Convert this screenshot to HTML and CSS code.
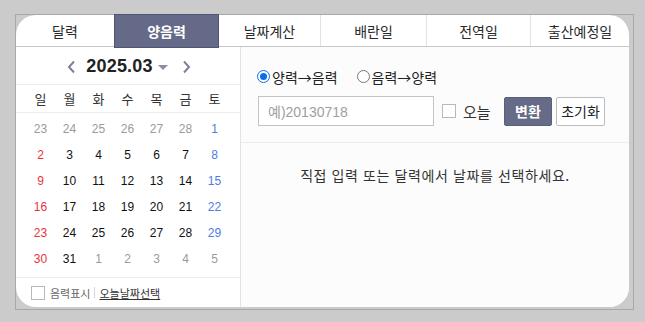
FILE: index.html
```html
<!DOCTYPE html>
<html lang="ko">
<head>
<meta charset="utf-8">
<link rel="stylesheet" href="styles.css">
</head>
<body>
<div class="frame">
  <div class="panel">
    <div class="tabs">
      <div class="tab t1">달력</div>
      <div class="tab t2 active">양음력</div>
      <div class="tab t3">날짜계산</div>
      <div class="tab t4">배란일</div>
      <div class="tab t5">전역일</div>
      <div class="tab t6">출산예정일</div>
    </div>
    <div class="body">
      <div class="cal">
        <div class="cal-head">
          <span class="arrow">
            <svg width="9" height="14" viewBox="0 0 9 14"><path d="M7 1.5 L2 7 L7 12.5" fill="none" stroke="#7d8299" stroke-width="2"/></svg>
          </span>
          <span class="month">2025.03</span>
          <span class="caret"></span>
          <span class="arrow right">
            <svg width="9" height="14" viewBox="0 0 9 14"><path d="M2 1.5 L7 7 L2 12.5" fill="none" stroke="#7d8299" stroke-width="2"/></svg>
          </span>
        </div>
        <div class="week">
          <span>일</span><span>월</span><span>화</span><span>수</span><span>목</span><span>금</span><span>토</span>
        </div>
        <div class="grid">
          <span class="o">23</span><span class="o">24</span><span class="o">25</span><span class="o">26</span><span class="o">27</span><span class="o">28</span><span class="sat">1</span>
          <span class="sun">2</span><span>3</span><span>4</span><span>5</span><span>6</span><span>7</span><span class="sat">8</span>
          <span class="sun">9</span><span>10</span><span>11</span><span>12</span><span>13</span><span>14</span><span class="sat">15</span>
          <span class="sun">16</span><span>17</span><span>18</span><span>19</span><span>20</span><span>21</span><span class="sat">22</span>
          <span class="sun">23</span><span>24</span><span>25</span><span>26</span><span>27</span><span>28</span><span class="sat">29</span>
          <span class="sun">30</span><span>31</span><span class="o">1</span><span class="o">2</span><span class="o">3</span><span class="o">4</span><span class="o">5</span>
        </div>
        <div class="cal-foot">
          <span class="box"></span>
          <span class="lunar">음력표시</span>
          <span class="bar"></span>
          <span class="today-link">오늘날짜선택</span>
        </div>
      </div>
      <div class="conv">
        <div class="radios">
          <label class="radio"><span class="dot on"></span>양력→음력</label>
          <label class="radio"><span class="dot"></span>음력→양력</label>
        </div>
        <div class="inputs">
          <div class="field">예)20130718</div>
          <span class="box small"></span>
          <span class="today">오늘</span>
          <span class="btn primary">변환</span>
          <span class="btn">초기화</span>
        </div>
        <div class="msg">직접 입력 또는 달력에서 날짜를 선택하세요.</div>
      </div>
    </div>
  </div>
</div>
</body>
</html>
```

FILE: styles.css
```css
* { box-sizing: border-box; }
html, body { margin: 0; padding: 0; }
body {
  background: #cbcbcb;
  font-family: "Noto Sans CJK KR", "Liberation Sans", sans-serif;
  color: #222;
  width: 645px;
  height: 322px;
  overflow: hidden;
}
.frame {
  margin: 14px 0 0 15px;
  width: 619px;
  height: 296px;
  border: 1px solid #a8a8a8;
  padding: 0 4px 2px 0;
}
.panel {
  width: 613px;
  height: 292px;
  background: #fff;
  border-radius: 20px;
  display: flex;
  flex-direction: column;
}
.tabs {
  display: flex;
  height: 32px;
  border-bottom: 1px solid #c6c6c6;
  flex: none;
}
.tab {
  display: flex;
  align-items: center;
  justify-content: center;
  font-size: 14px;
  color: #2a2a2a;
  border-left: 1px solid #e2e2e2;
  line-height: 1;
  flex: none;
}
.t1 { width: 98px; border-left: none; }
.t2 { width: 105px; }
.t3 { width: 101px; }
.t4 { width: 106px; }
.t5 { width: 104px; }
.t6 { width: 99px; }
.tab.active {
  background: #646a88;
  color: #fff;
  font-weight: bold;
  border: 1px solid #4f5573;
  margin: -1px 0 -1px;
  height: 34px;
}
.tab.active + .tab { border-left: none; }
.body {
  flex: 1;
  display: flex;
  min-height: 0;
}
.cal {
  width: 225px;
  border-right: 1px solid #e3e3e3;
  display: flex;
  flex-direction: column;
  border-bottom-left-radius: 20px;
}
.cal-head {
  height: 38px;
  border-bottom: 1px solid #ececec;
  display: flex;
  align-items: center;
  justify-content: center;
  padding-top: 2px;
  padding-left: 2px;
}
.arrow { display: flex; align-items: center; margin-right: 10px; }
.arrow.right { margin: 0 0 0 14px; }
.month {
  font-family: "Liberation Sans", sans-serif;
  font-weight: bold;
  font-size: 18px;
  color: #222;
  letter-spacing: 0.2px;
}
.caret {
  width: 0; height: 0;
  border-left: 5px solid transparent;
  border-right: 5px solid transparent;
  border-top: 5px solid #8a8ea3;
  margin-left: 5px;
  margin-top: 2px;
}
.week, .grid {
  display: grid;
  grid-template-columns: repeat(7, 29px);
  padding-left: 10px;
}
.week {
  height: 28px;
  border-bottom: 1px solid #ececec;
  align-items: center;
  font-size: 13px;
  color: #333;
}
.week span, .grid span { text-align: center; }
.grid {
  grid-auto-rows: 26px;
  padding-top: 3px;
  padding-bottom: 5px;
  align-items: center;
  font-family: "Liberation Sans", sans-serif;
  font-size: 12px;
  color: #111;
}
.grid .o { color: #9a9a9a; }
.grid .sun { color: #e8333b; }
.grid .sat { color: #4b7ee0; }
.cal-foot {
  flex: 1;
  border-top: 1px solid #ececec;
  display: flex;
  align-items: center;
  padding-left: 15px;
  font-size: 11px;
}
.box {
  width: 14px; height: 14px;
  border: 1px solid #b8b8b8;
  background: #fff;
  flex: none;
}
.lunar { color: #666; margin-left: 5px; }
.bar { width: 1px; height: 11px; background: #d5d5d5; margin: 0 4px; }
.today-link { color: #333; text-decoration: underline; }
.conv {
  flex: 1;
  background: #fcfcfc;
  border-bottom-right-radius: 20px;
  display: flex;
  flex-direction: column;
}
.radios {
  display: flex;
  align-items: center;
  padding: 10px 0 0 16px;
  height: 49px;
  font-size: 14px;
  color: #222;
}
.radio { display: flex; align-items: center; margin-right: 19px; }
.dot {
  width: 13px; height: 13px;
  border-radius: 50%;
  border: 1px solid #767676;
  background: #fff;
  margin-right: 2px;
  display: flex; align-items: center; justify-content: center;
}
.dot.on { border-color: #0a6ee8; }
.dot.on::after {
  content: "";
  width: 7px; height: 7px; border-radius: 50%;
  background: #0a6ee8;
}
.inputs {
  display: flex;
  align-items: center;
  padding-left: 17px;
  height: 30px;
}
.field {
  width: 176px; height: 30px;
  border: 1px solid #c3c3c3;
  background: #fff;
  font-family: "Liberation Sans", "Noto Sans CJK KR", sans-serif;
  font-size: 14px;
  color: #9e9e9e;
  display: flex; align-items: center;
  padding-left: 9px;
}
.box.small { margin-left: 8px; }
.today { font-size: 15px; color: #333; margin-left: 7px; width: 41px; }
.btn {
  height: 29px;
  display: flex; align-items: center; justify-content: center;
  font-size: 14px;
  border-radius: 2px;
  border: 1px solid #bdbdbd;
  background: #fff;
  color: #222;
  width: 49px;
  margin-left: 4px;
}
.btn.primary {
  background: #666b87;
  border-color: #5b6079;
  color: #fff;
  font-weight: bold;
  width: 48px;
  margin-left: 0;
}
.msg {
  margin-top: 16px;
  border-top: 1px solid #ededed;
  padding-top: 22px;
  text-align: center;
  font-size: 14px;
  letter-spacing: 0.6px;
  color: #333;
}
```
